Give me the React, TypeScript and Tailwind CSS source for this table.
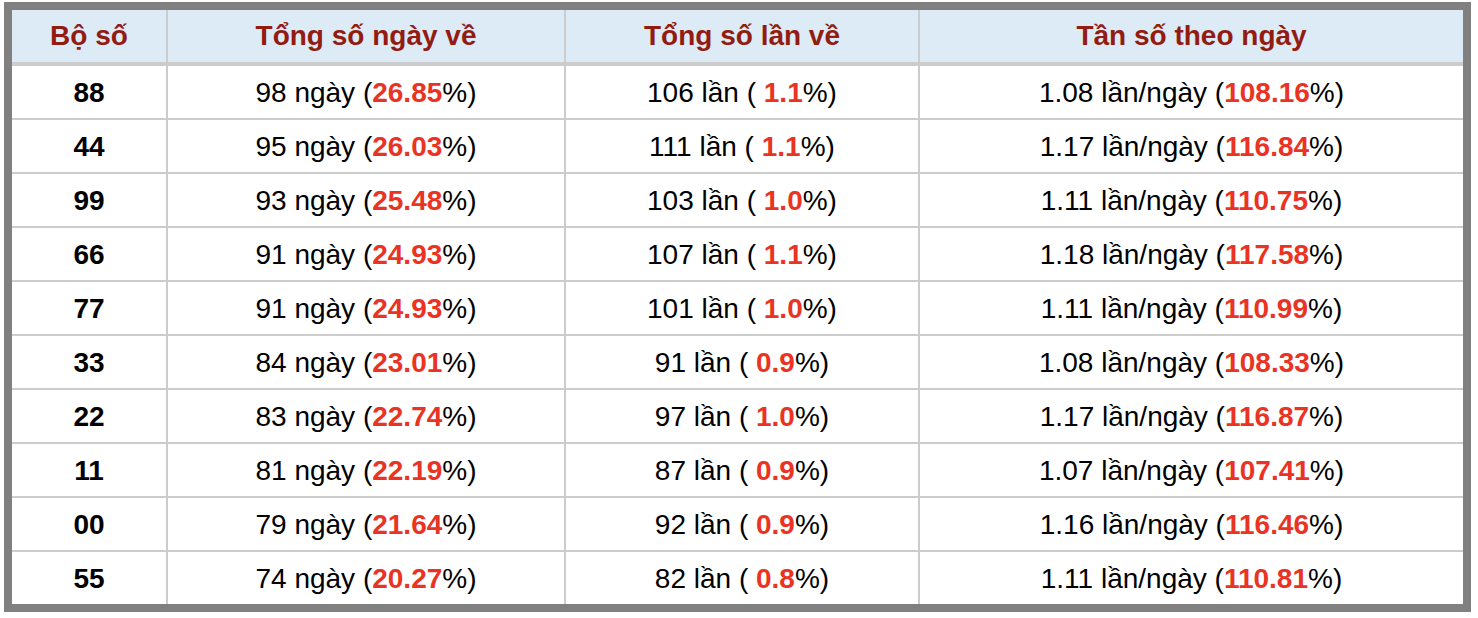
const rows = [
  { bo: "88", ngay: "98", ngayPct: "26.85", lan: "106", lanPct: "1.1", tan: "1.08", tanPct: "108.16" },
  { bo: "44", ngay: "95", ngayPct: "26.03", lan: "111", lanPct: "1.1", tan: "1.17", tanPct: "116.84" },
  { bo: "99", ngay: "93", ngayPct: "25.48", lan: "103", lanPct: "1.0", tan: "1.11", tanPct: "110.75" },
  { bo: "66", ngay: "91", ngayPct: "24.93", lan: "107", lanPct: "1.1", tan: "1.18", tanPct: "117.58" },
  { bo: "77", ngay: "91", ngayPct: "24.93", lan: "101", lanPct: "1.0", tan: "1.11", tanPct: "110.99" },
  { bo: "33", ngay: "84", ngayPct: "23.01", lan: "91", lanPct: "0.9", tan: "1.08", tanPct: "108.33" },
  { bo: "22", ngay: "83", ngayPct: "22.74", lan: "97", lanPct: "1.0", tan: "1.17", tanPct: "116.87" },
  { bo: "11", ngay: "81", ngayPct: "22.19", lan: "87", lanPct: "0.9", tan: "1.07", tanPct: "107.41" },
  { bo: "00", ngay: "79", ngayPct: "21.64", lan: "92", lanPct: "0.9", tan: "1.16", tanPct: "116.46" },
  { bo: "55", ngay: "74", ngayPct: "20.27", lan: "82", lanPct: "0.8", tan: "1.11", tanPct: "110.81" },
];

const headers = ["Bộ số", "Tổng số ngày về", "Tổng số lần về", "Tần số theo ngày"];

const Red = ({ children }: { children: React.ReactNode }) => (
  <span className="font-bold text-[#ea3323]">{children}</span>
);

export default function App() {
  return (
    <div className="w-[1478px] h-[618px] bg-white pt-[2px] pl-[4px] font-['Liberation_Sans',Arial,sans-serif]">
      <div className="w-[1467px] border-8 border-[#808080] bg-[#cccccc]">
        <div className="grid grid-cols-[154px_396px_352px_543px] gap-x-[2px] mb-[4px]">
          {headers.map((h) => (
            <div
              key={h}
              className="h-[52px] flex items-center justify-center bg-[#dcebf5] text-[28px] font-bold text-[#921c12]"
            >
              {h}
            </div>
          ))}
        </div>
        <div className="grid grid-cols-[154px_396px_352px_543px] gap-x-[2px] gap-y-[2px] auto-rows-[52px]">
          {rows.map((r) => (
            <div key={r.bo} className="contents">
              <div className="bg-white flex items-center justify-center pt-[2px] text-[28px] font-bold text-black">
                {r.bo}
              </div>
              <div className="bg-white flex items-center justify-center pt-[2px] text-[28px] text-black">
                <span>
                  {r.ngay} ngày (<Red>{r.ngayPct}</Red>%)
                </span>
              </div>
              <div className="bg-white flex items-center justify-center pt-[2px] text-[28px] text-black">
                <span>
                  {r.lan} lần ( <Red>{r.lanPct}</Red>%)
                </span>
              </div>
              <div className="bg-white flex items-center justify-center pt-[2px] text-[28px] text-black">
                <span>
                  {r.tan} lần/ngày (<Red>{r.tanPct}</Red>%)
                </span>
              </div>
            </div>
          ))}
        </div>
      </div>
    </div>
  );
}
